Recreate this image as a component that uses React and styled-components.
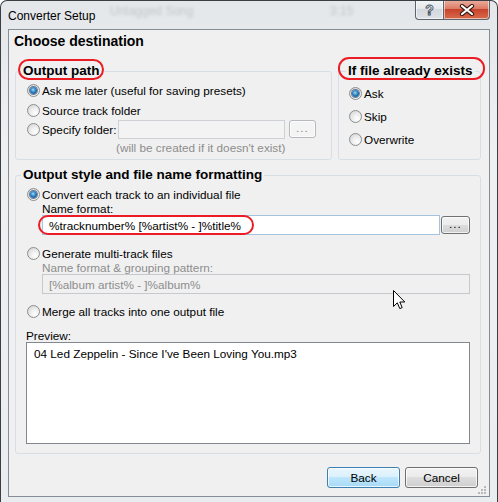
import React from 'react'
import styled, { createGlobalStyle } from 'styled-components'

const GlobalStyle = createGlobalStyle`
  html, body {
    margin: 0;
    padding: 0;
    background: #ffffff;
  }
  body {
    font-family: "Liberation Sans", Arial, sans-serif;
    font-size: 11.75px;
    color: #000000;
  }
  * {
    box-sizing: border-box;
  }
`

const Window = styled.div`
  position: relative;
  width: 498px;
  height: 502px;
  border: 1px solid #3b3f44;
  border-bottom: none;
  border-radius: 7px 7px 0 0;
  background: linear-gradient(180deg, #e4e7ea 0%, #eef0f2 30%, #eaedf0 100%);
  padding: 0 7px 5px;
  display: flex;
  flex-direction: column;
  overflow: hidden;
`

const TitleBar = styled.div`
  position: relative;
  height: 28px;
  display: flex;
  justify-content: space-between;
  align-items: flex-start;
`

const Ghost = styled.div`
  position: absolute;
  left: ${(p) => p.$x}px;
  top: ${(p) => p.$y}px;
  font-size: 12px;
  color: rgba(60, 60, 60, 0.2);
  filter: blur(1.4px);
  white-space: nowrap;
`

const Title = styled.div`
  position: relative;
  padding-top: 8px;
  font-size: 12px;
  line-height: 14px;
  color: #000;
`

const Caption = styled.div`
  display: flex;
  margin-top: -1px;
`

const CaptionButton = styled.div`
  height: 20px;
  display: flex;
  align-items: center;
  justify-content: center;
  border: 1px solid #5d646c;
  border-top: none;
  box-shadow: inset 0 0 0 1px rgba(255, 255, 255, 0.55);
`

const HelpButton = styled(CaptionButton)`
  width: 28px;
  border-right: none;
  border-radius: 0 0 0 4px;
  background: linear-gradient(180deg, #f3f5f7 0%, #e4e8ec 45%, #d3d8de 50%, #dfe3e8 100%);
  font-weight: bold;
  font-size: 14px;
  color: #f6f6f6;
  -webkit-text-stroke: 0.9px #46505b;
`

const CloseButton = styled(CaptionButton)`
  width: 47px;
  border-radius: 0 0 4px 0;
  background: linear-gradient(180deg, #eab0a2 0%, #dd7c66 45%, #c7432c 50%, #d86a4c 100%);
`

const Client = styled.div`
  position: relative;
  flex: 1;
  background: #f0f0f0;
  border: 1px solid #858d96;
  padding: 2px 8px 0 6px;
  display: flex;
  flex-direction: column;
`

const Heading = styled.div`
  margin-left: -1px;
  font-size: 14px;
  line-height: 18px;
  font-weight: bold;
`

const TopRow = styled.div`
  margin-top: 13px;
  display: flex;
  gap: 6px;
`

const Group = styled.fieldset`
  margin: 0;
  margin-top: ${(p) => p.$mt || 0}px;
  min-width: 0;
  width: ${(p) => (p.$w ? `${p.$w}px` : 'auto')};
  flex: ${(p) => (p.$grow ? '1' : 'none')};
  border: 1px solid #d5dfe5;
  border-radius: 3px;
  padding: 0 ${(p) => p.$pr}px ${(p) => p.$pb}px ${(p) => p.$pl}px;
  display: flex;
  flex-direction: column;
`

const Legend = styled.legend`
  margin-left: ${(p) => p.$ml}px;
  padding: 0 2px;
  font-size: 13.5px;
  line-height: 16px;
  font-weight: bold;
  white-space: nowrap;
`

const Circled = styled.span`
  position: relative;
  display: inline-block;
  &::after {
    content: '';
    position: absolute;
    top: ${(p) => p.$t}px;
    bottom: ${(p) => p.$b}px;
    left: ${(p) => p.$l}px;
    right: ${(p) => p.$r}px;
    border: 2px solid #ec1c24;
    border-radius: 11px;
    pointer-events: none;
  }
`

const Option = styled.div`
  display: flex;
  align-items: center;
  gap: 2px;
  height: 18px;
  margin-top: ${(p) => p.$mt || 0}px;
`

const Radio = styled.span`
  flex: none;
  width: 13px;
  height: 13px;
  border-radius: 50%;
  border: 1px solid #8c8e90;
  background: radial-gradient(circle at 65% 70%, #ffffff 0%, #f1f1f1 35%, #cfcfcf 100%);
  display: flex;
  align-items: center;
  justify-content: center;
  &::after {
    content: '';
    display: ${(p) => (p.$checked ? 'block' : 'none')};
    width: 7px;
    height: 7px;
    border-radius: 50%;
    background: radial-gradient(circle at 45% 40%, #9fd8f8 0%, #2d7fc0 45%, #123f6b 100%);
    box-shadow: 0 0 0 1px rgba(20, 50, 90, 0.6);
  }
`

const OptionText = styled.span`
  width: ${(p) => (p.$w ? `${p.$w}px` : 'auto')};
  margin-left: ${(p) => p.$ml || 0}px;
  white-space: nowrap;
`

const TextBox = styled.div`
  position: relative;
  flex: ${(p) => (p.$w ? 'none' : '1')};
  width: ${(p) => (p.$w ? `${p.$w}px` : 'auto')};
  height: ${(p) => p.$h || 20}px;
  display: flex;
  align-items: center;
  padding: 0 6px;
  white-space: nowrap;
  border: 1px solid ${(p) => (p.$focus ? '#a4c3df' : '#c6c9ce')};
  background: ${(p) => (p.$disabled ? '#f0f0f0' : '#ffffff')};
  color: ${(p) => (p.$disabled ? '#8d8d8d' : '#000000')};
  ${(p) => (p.$greyed ? 'background: #f3f3f3; border-color: #cdd0d4;' : '')}
`

const SmallButton = styled.div`
  flex: none;
  width: ${(p) => p.$w}px;
  height: ${(p) => p.$h}px;
  margin-left: ${(p) => p.$ml}px;
  display: flex;
  align-items: center;
  justify-content: center;
  padding-bottom: 3px;
  border-radius: 3px;
  border: 1px solid ${(p) => (p.$disabled ? '#b5b9bd' : '#707070')};
  background: ${(p) =>
    p.$disabled
      ? '#f4f4f4'
      : 'linear-gradient(180deg, #f2f2f2 0%, #ebebeb 50%, #dddddd 50%, #cfcfcf 100%)'};
  box-shadow: inset 0 0 0 1px rgba(255, 255, 255, 0.7);
  color: ${(p) => (p.$disabled ? '#8a8a8a' : '#000000')};
  letter-spacing: 1px;
`

const Row = styled.div`
  display: flex;
  align-items: center;
  height: 20px;
  margin-top: ${(p) => p.$mt || 0}px;
  margin-left: ${(p) => p.$ml || 0}px;
`

const SubLabel = styled.div`
  line-height: 14px;
  margin-top: ${(p) => p.$mt || 0}px;
  margin-left: ${(p) => p.$ml || 0}px;
  color: ${(p) => (p.$muted ? '#8d8d8d' : '#000000')};
  white-space: nowrap;
`

const PreviewBox = styled.div`
  margin-top: -1px;
  margin-left: -1px;
  height: 102px;
  border: 1px solid #828790;
  background: #ffffff;
  padding: 4px 7px;
  line-height: 14px;
`

const ButtonRow = styled.div`
  margin-top: 13px;
  padding-right: 3px;
  display: flex;
  justify-content: flex-end;
  gap: 5px;
`

const DialogButton = styled.div`
  width: 73px;
  height: 21px;
  display: flex;
  align-items: center;
  justify-content: center;
  border-radius: 3px;
  border: 1px solid ${(p) => (p.$default ? '#3c7fb1' : '#707070')};
  background: ${(p) =>
    p.$default
      ? 'linear-gradient(180deg, #eaf6fd 0%, #d9f0fc 50%, #bee6fd 50%, #a7d9f5 100%)'
      : 'linear-gradient(180deg, #f2f2f2 0%, #ebebeb 50%, #dddddd 50%, #cfcfcf 100%)'};
  box-shadow: inset 0 0 0 1px rgba(255, 255, 255, 0.75);
`

const Grip = styled.svg`
  position: absolute;
  right: 2px;
  bottom: 1px;
`

const Cursor = styled.svg`
  position: absolute;
  left: 392px;
  top: 289px;
`

const Opt = ({ checked, children, mt }) => (
  <Option $mt={mt}>
    <Radio $checked={checked} />
    <OptionText>{children}</OptionText>
  </Option>
)

const App = () => (
  <>
    <GlobalStyle />
    <Window>
      <TitleBar>
        <Ghost $x={102} $y={3}>Untagged Song</Ghost>
        <Ghost $x={322} $y={3}>3:15</Ghost>
        <Title>Converter Setup</Title>
        <Caption>
          <HelpButton>?</HelpButton>
          <CloseButton>
            <svg width="16" height="12" viewBox="0 0 16 12">
              <path d="M3 2 L13 10 M13 2 L3 10" stroke="#3a1a12" strokeWidth="4.2" strokeLinecap="round" />
              <path d="M3 2 L13 10 M13 2 L3 10" stroke="#ffffff" strokeWidth="2.2" strokeLinecap="round" />
            </svg>
          </CloseButton>
        </Caption>
      </TitleBar>

      <Client>
        <Heading>Choose destination</Heading>

        <TopRow>
          <Group $w={317} $pl={11} $pr={10} $pb={4}>
            <Legend $ml={-6}>
              <Circled $t={-4} $b={-1} $l={-5} $r={-5}>Output path</Circled>
            </Legend>
            <Opt checked mt={2}>Ask me later (useful for saving presets)</Opt>
            <Opt mt={2}>Source track folder</Opt>
            <Row>
              <Radio />
              <OptionText $w={76} $ml={2}>Specify folder:</OptionText>
              <TextBox $w={167} $h={19} $greyed />
              <SmallButton $w={27} $h={18} $ml={4} $disabled>...</SmallButton>
            </Row>
            <SubLabel $mt={2} $ml={89} $muted>(will be created if it doesn't exist)</SubLabel>
          </Group>

          <Group $grow $pl={10} $pr={4} $pb={8}>
            <Legend $ml={-3}>
              <Circled $t={-6} $b={-1} $l={-10} $r={-12}>If file already exists</Circled>
            </Legend>
            <Opt checked mt={5}>Ask</Opt>
            <Opt mt={5}>Skip</Opt>
            <Opt mt={5}>Overwrite</Opt>
          </Group>
        </TopRow>

        <Group $mt={7} $pl={11} $pr={10} $pb={9}>
          <Legend $ml={-6}>Output style and file name formatting</Legend>
          <Opt checked mt={2}>Convert each track to an individual file</Opt>
          <SubLabel $mt={-1} $ml={15}>Name format:</SubLabel>
          <Row $mt={-1} $ml={15}>
            <TextBox $focus>
              <Circled $t={-4} $b={-3} $l={-11} $r={-13}>%tracknumber% [%artist% - ]%title%</Circled>
            </TextBox>
            <SmallButton $w={29} $h={18} $ml={1}>...</SmallButton>
          </Row>
          <Opt mt={9}>Generate multi-track files</Opt>
          <SubLabel $mt={-1} $ml={15} $muted>Name format &amp; grouping pattern:</SubLabel>
          <Row $mt={-1} $ml={15}>
            <TextBox $disabled>[%album artist% - ]%album%</TextBox>
          </Row>
          <Opt mt={8}>Merge all tracks into one output file</Opt>
          <SubLabel $mt={9} $ml={-1}>Preview:</SubLabel>
          <PreviewBox>04 Led Zeppelin - Since I've Been Loving You.mp3</PreviewBox>
        </Group>

        <ButtonRow>
          <DialogButton $default>Back</DialogButton>
          <DialogButton>Cancel</DialogButton>
        </ButtonRow>

        <Grip width="10" height="10" viewBox="0 0 10 10">
          <g fill="#b4b9be">
            <rect x="7" y="1" width="2" height="2" />
            <rect x="4" y="4" width="2" height="2" />
            <rect x="7" y="4" width="2" height="2" />
            <rect x="1" y="7" width="2" height="2" />
            <rect x="4" y="7" width="2" height="2" />
            <rect x="7" y="7" width="2" height="2" />
          </g>
        </Grip>
      </Client>

      <Cursor width="13" height="20" viewBox="0 0 13 20">
        <path d="M0.5 0.5 L0.5 16.5 L4.3 12.8 L6.8 18.6 L9.2 17.6 L6.8 12 L11.8 12 Z" fill="#ffffff" stroke="#000000" strokeWidth="1" strokeLinejoin="miter" />
      </Cursor>
    </Window>
  </>
)

export default App
